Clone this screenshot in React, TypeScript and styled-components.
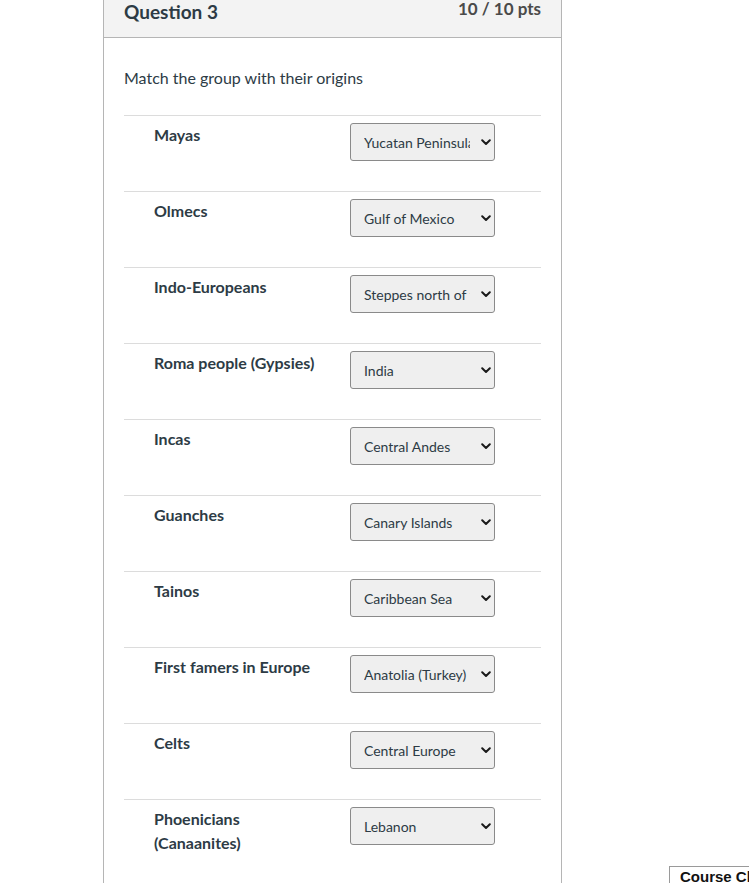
import React from "react";
import styled, { createGlobalStyle } from "styled-components";

const GlobalStyle = createGlobalStyle`
  html, body {
    margin: 0;
    padding: 0;
    background: #ffffff;
    height: 100%;
    overflow: hidden;
  }
  body {
    font-family: Lato, "Open Sans", sans-serif;
    color: #2d3b45;
  }
`;

interface Match {
  group: string;
  origin: string;
}

const matches: Match[] = [
  { group: "Mayas", origin: "Yucatan Peninsula" },
  { group: "Olmecs", origin: "Gulf of Mexico" },
  { group: "Indo-Europeans", origin: "Steppes north of the Black Sea" },
  { group: "Roma people (Gypsies)", origin: "India" },
  { group: "Incas", origin: "Central Andes" },
  { group: "Guanches", origin: "Canary Islands" },
  { group: "Tainos", origin: "Caribbean Sea" },
  { group: "First famers in Europe", origin: "Anatolia (Turkey)" },
  { group: "Celts", origin: "Central Europe" },
  { group: "Phoenicians (Canaanites)", origin: "Lebanon" },
];

const Chevron = () => (
  <svg width="10" height="7" viewBox="0 0 10 7">
    <path d="M1.2 1.3 L5 5 L8.8 1.3" fill="none" stroke="#1a1a1a" strokeWidth="2" strokeLinecap="round" strokeLinejoin="round" />
  </svg>
);

const App: React.FC = () => {
  return (
    <Page>
      <GlobalStyle />
      <QuestionCard>
        <Header>
          <Title>Question 3</Title>
          <Points>10 / 10 pts</Points>
        </Header>
        <Body>
          <Prompt>Match the group with their origins</Prompt>
          <MatchList>
            {matches.map((m) => (
              <MatchRow key={m.group}>
                <GroupLabel>{m.group}</GroupLabel>
                <SelectWrap>
                  <Select defaultValue={m.origin}>
                    <option value={m.origin}>{m.origin}</option>
                  </Select>
                  <ChevronSlot>
                    <Chevron />
                  </ChevronSlot>
                </SelectWrap>
              </MatchRow>
            ))}
          </MatchList>
        </Body>
      </QuestionCard>
      <CourseButton>Course Chat</CourseButton>
    </Page>
  );
};

const Page = styled.div`
  padding-left: 103px;
`;

const QuestionCard = styled.div`
  width: 457px;
  border-left: 1px solid #b5b5b5;
  border-right: 1px solid #b5b5b5;
  min-height: 883px;
`;

const Header = styled.div`
  display: flex;
  justify-content: space-between;
  align-items: flex-start;
  height: 37px;
  padding: 0 20px;
  background: #f3f3f3;
  border-bottom: 1px solid #b5b5b5;
`;

const Title = styled.h2`
  margin: 0;
  font-size: 19px;
  line-height: 24px;
  font-weight: 700;
  color: #2d3b45;
`;

const Points = styled.div`
  margin-top: -1px;
  font-size: 17px;
  line-height: 20px;
  font-weight: 700;
  color: #4a4a4a;
`;

const Body = styled.div`
  padding: 28px 20px 0;
`;

const Prompt = styled.p`
  margin: 0 0 25px;
  font-size: 16px;
  line-height: 24px;
`;

const MatchList = styled.div`
  display: flex;
  flex-direction: column;
`;

const MatchRow = styled.div`
  display: flex;
  align-items: flex-start;
  height: 76px;
  box-sizing: border-box;
  border-top: 1px solid #dcdcdc;
  padding: 7px 0 0 30px;
`;

const GroupLabel = styled.div`
  width: 170px;
  margin-right: 26px;
  font-size: 16px;
  line-height: 24px;
  font-weight: 700;
  color: #2d3b45;
`;

const SelectWrap = styled.div`
  position: relative;
  width: 145px;
`;

const Select = styled.select`
  appearance: none;
  width: 145px;
  height: 38px;
  box-sizing: border-box;
  padding: 0 24px 0 13px;
  border: 1px solid #8a8a8a;
  border-radius: 3px;
  background: #efefef;
  font-family: Lato, "Open Sans", sans-serif;
  font-size: 14px;
  color: #2d3b45;
  text-overflow: clip;
`;

const ChevronSlot = styled.span`
  position: absolute;
  right: 4px;
  top: 16px;
  display: flex;
  pointer-events: none;
`;

const CourseButton = styled.div`
  position: fixed;
  left: 669px;
  top: 866px;
  width: 140px;
  height: 40px;
  box-sizing: border-box;
  padding: 0 10px;
  border: 1px solid #9a9a9a;
  background: #ffffff;
  font-family: "Liberation Sans", Arial, sans-serif;
  font-weight: 700;
  font-size: 15px;
  line-height: 20px;
  color: #111;
  display: flex;
  align-items: flex-start;
  white-space: nowrap;
`;

export default App;
